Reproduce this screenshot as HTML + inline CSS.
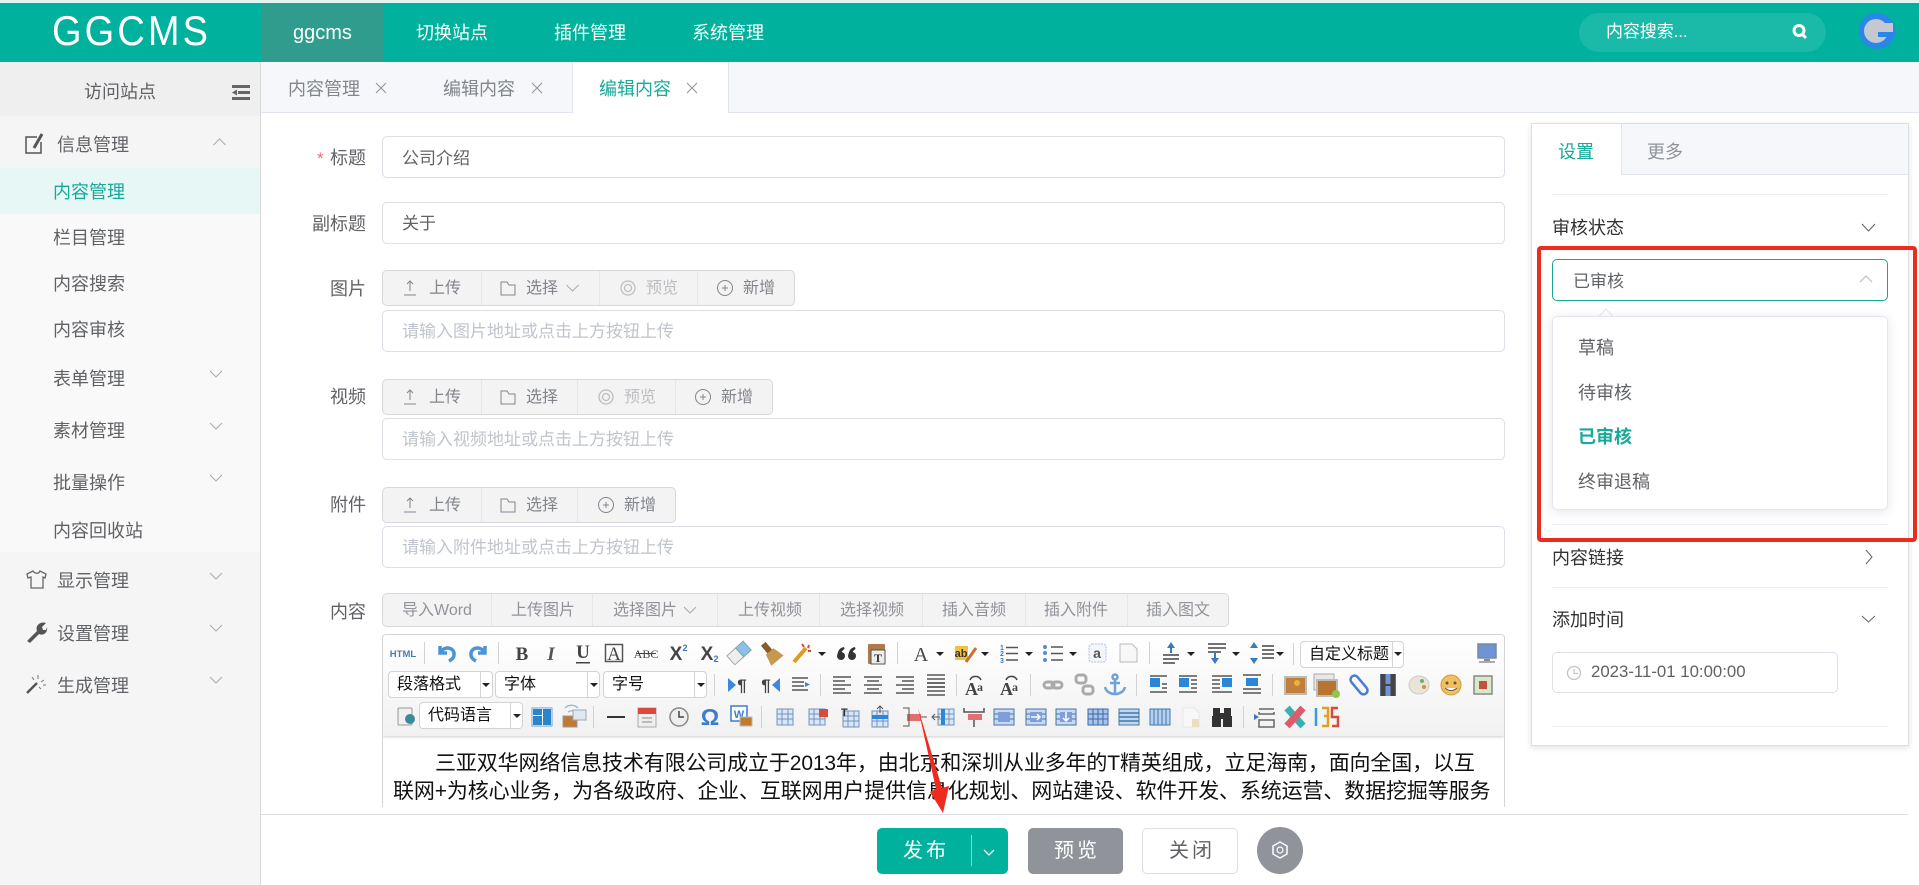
<!DOCTYPE html>
<html lang="zh-CN"><head><meta charset="utf-8"><title>GGCMS</title>
<style>
*{box-sizing:border-box}
html,body{margin:0;padding:0;width:1919px;height:885px;overflow:hidden;background:#fff;font-family:"Liberation Sans","Noto Sans CJK SC",sans-serif;color:#606266}
.a{position:absolute}
.t{position:absolute;white-space:nowrap;line-height:1;transform:translateY(1px)}
.inp{position:absolute;left:382px;width:1123px;height:42px;border:1px solid #dcdfe6;border-radius:5px;background:#fff}
.grp{position:absolute;height:36px;left:382px;border:1px solid #d8d8d8;border-radius:5px;background:#f3f3f3}
.grp i{position:absolute;top:0;bottom:0;width:1px;background:#e6e6e6}
.sel{position:absolute;background:#fff;border:1px solid #d4d4d4;border-radius:4px;height:27px}
.sel b{position:absolute;top:0;bottom:0;width:1px;background:#d4d4d4}
.sel span{position:absolute;top:4px;left:8px;font-size:16px;line-height:18px;color:#111;white-space:nowrap}
</style></head><body>

<!-- header -->
<div class="a" style="left:0;top:0;width:1919px;height:3px;background:#e3f4f2"></div>
<div class="a" style="left:0;top:3px;width:1919px;height:59px;background:#00b19d"></div>
<div class="a" style="left:261px;top:3px;width:122px;height:59px;background:#2f9c8e"></div>
<div class="t" style="left:52px;top:12px;font-size:38px;letter-spacing:3.1px;color:#fff;transform:scaleY(1.1);transform-origin:0 50%;line-height:40px">GGCMS</div>
<div class="t" style="left:293px;top:22px;font-size:20px;color:#fff">ggcms</div>
<div class="t" style="left:416px;top:23px;font-size:18px;color:#fff">切换站点</div>
<div class="t" style="left:554px;top:23px;font-size:18px;color:#fff">插件管理</div>
<div class="t" style="left:692px;top:23px;font-size:18px;color:#fff">系统管理</div>
<div class="a" style="left:1579px;top:13px;width:247px;height:39px;border-radius:20px;background:#1ab9a8"></div>
<div class="t" style="left:1606px;top:22px;font-size:17px;letter-spacing:-.1px;color:#fff">内容搜索...</div>

<!-- sidebar -->
<div class="a" style="left:0;top:62px;width:261px;height:823px;background:#f5f5f5;border-right:1px solid #d9d9d9"></div>
<div class="a" style="left:0;top:62px;width:260px;height:54px;background:#efefef"></div>
<div class="a" style="left:0;top:168px;width:260px;height:384px;background:#f9f9f9"></div>
<div class="a" style="left:0;top:168px;width:260px;height:46px;background:#e6f7f5"></div>
<div class="t" style="left:84px;top:82px;font-size:18px">访问站点</div>
<div class="t" style="left:57px;top:135px;font-size:18px">信息管理</div>
<div class="t" style="left:53px;top:182px;font-size:18px;color:#17a999">内容管理</div>
<div class="t" style="left:53px;top:228px;font-size:18px">栏目管理</div>
<div class="t" style="left:53px;top:274px;font-size:18px">内容搜索</div>
<div class="t" style="left:53px;top:320px;font-size:18px">内容审核</div>
<div class="t" style="left:53px;top:369px;font-size:18px">表单管理</div>
<div class="t" style="left:53px;top:421px;font-size:18px">素材管理</div>
<div class="t" style="left:53px;top:473px;font-size:18px">批量操作</div>
<div class="t" style="left:53px;top:521px;font-size:18px">内容回收站</div>
<div class="t" style="left:57px;top:571px;font-size:18px">显示管理</div>
<div class="t" style="left:57px;top:624px;font-size:18px">设置管理</div>
<div class="t" style="left:57px;top:676px;font-size:18px">生成管理</div>

<!-- tabs -->
<div class="a" style="left:261px;top:62px;width:1658px;height:51px;background:#f5f7fa;border-bottom:1px solid #dfe4ed"></div>
<div class="a" style="left:572px;top:62px;width:157px;height:51px;background:#fff;border-left:1px solid #dfe4ed;border-right:1px solid #dfe4ed"></div>
<div class="t" style="left:288px;top:79px;font-size:18px;color:#82858c">内容管理</div>
<div class="t" style="left:443px;top:79px;font-size:18px;color:#82858c">编辑内容</div>
<div class="t" style="left:599px;top:79px;font-size:18px;color:#17a999">编辑内容</div>

<!-- form -->
<div class="t" style="left:317px;top:149px;font-size:17px;color:#f56c6c">*</div>
<div class="t" style="left:330px;top:148px;font-size:18px">标题</div>
<div class="inp" style="top:136px"></div>
<div class="t" style="left:402px;top:149px;font-size:17px">公司介绍</div>
<div class="t" style="left:312px;top:214px;font-size:18px">副标题</div>
<div class="inp" style="top:202px"></div>
<div class="t" style="left:402px;top:214px;font-size:17px">关于</div>

<div class="t" style="left:330px;top:279px;font-size:18px">图片</div>
<div class="grp" style="top:270px;width:413px"><i style="left:98px"></i><i style="left:216px"></i><i style="left:314px"></i></div>
<div class="t" style="left:429px;top:280px;font-size:16px;color:#82858c">上传</div>
<div class="t" style="left:526px;top:280px;font-size:16px;color:#82858c">选择</div>
<div class="t" style="left:646px;top:280px;font-size:16px;color:#bcbec2">预览</div>
<div class="t" style="left:743px;top:280px;font-size:16px;color:#82858c">新增</div>
<div class="inp" style="top:310px"></div>
<div class="t" style="left:402px;top:322px;font-size:17px;color:#c0c4cc">请输入图片地址或点击上方按钮上传</div>

<div class="t" style="left:330px;top:387px;font-size:18px">视频</div>
<div class="grp" style="top:379px;width:391px"><i style="left:98px"></i><i style="left:194px"></i><i style="left:292px"></i></div>
<div class="t" style="left:429px;top:389px;font-size:16px;color:#82858c">上传</div>
<div class="t" style="left:526px;top:389px;font-size:16px;color:#82858c">选择</div>
<div class="t" style="left:624px;top:389px;font-size:16px;color:#bcbec2">预览</div>
<div class="t" style="left:721px;top:389px;font-size:16px;color:#82858c">新增</div>
<div class="inp" style="top:418px"></div>
<div class="t" style="left:402px;top:430px;font-size:17px;color:#c0c4cc">请输入视频地址或点击上方按钮上传</div>

<div class="t" style="left:330px;top:495px;font-size:18px">附件</div>
<div class="grp" style="top:487px;width:294px"><i style="left:98px"></i><i style="left:194px"></i></div>
<div class="t" style="left:429px;top:497px;font-size:16px;color:#82858c">上传</div>
<div class="t" style="left:526px;top:497px;font-size:16px;color:#82858c">选择</div>
<div class="t" style="left:624px;top:497px;font-size:16px;color:#82858c">新增</div>
<div class="inp" style="top:526px"></div>
<div class="t" style="left:402px;top:538px;font-size:17px;color:#c0c4cc">请输入附件地址或点击上方按钮上传</div>

<div class="t" style="left:330px;top:602px;font-size:18px">内容</div>
<div class="grp" style="top:593px;height:34px;width:847px"><i style="left:108px"></i><i style="left:209px"></i><i style="left:334px"></i><i style="left:436px"></i><i style="left:539px"></i><i style="left:642px"></i><i style="left:744px"></i></div>
<div class="t" style="left:402px;top:602px;font-size:16px;color:#909399">导入Word</div>
<div class="t" style="left:511px;top:602px;font-size:16px;color:#909399">上传图片</div>
<div class="t" style="left:613px;top:602px;font-size:16px;color:#909399">选择图片</div>
<div class="t" style="left:738px;top:602px;font-size:16px;color:#909399">上传视频</div>
<div class="t" style="left:840px;top:602px;font-size:16px;color:#909399">选择视频</div>
<div class="t" style="left:942px;top:602px;font-size:16px;color:#909399">插入音频</div>
<div class="t" style="left:1044px;top:602px;font-size:16px;color:#909399">插入附件</div>
<div class="t" style="left:1146px;top:602px;font-size:16px;color:#909399">插入图文</div>

<!-- editor -->
<div class="a" style="left:382px;top:634px;width:1123px;height:180px;border:1px solid #d4d4d4;border-radius:4px 4px 0 0;background:#fff;overflow:hidden">
  <div class="a" style="left:0;top:0;width:1121px;height:101px;background:linear-gradient(#fff,#f1f1f1);box-shadow:0 1px 3px rgba(0,0,0,.2)"></div>
  <div class="a" style="left:10px;top:115px;font-size:21px;line-height:28px;letter-spacing:-.13px;color:#111;white-space:nowrap">
    <div style="text-indent:42px">三亚双华网络信息技术有限公司成立于2013年，由北京和深圳从业多年的T精英组成，立足海南，面向全国，以互</div>
    <div>联网+为核心业务，为各级政府、企业、互联网用户提供信息化规划、网站建设、软件开发、系统运营、数据挖掘等服务</div>
    <div>商之一。2013年成立以来，公司立足三亚，服务于海南省各级政府和企业单位，成为本地值得信赖的合作伙伴之一</div>
  </div>
</div>
<div class="sel" style="left:1300px;top:641px;width:104px"><b style="left:91px"></b><span style="left:8px">自定义标题</span></div>
<div class="sel" style="left:388px;top:671px;width:105px"><b style="left:91px"></b><span>段落格式</span></div>
<div class="sel" style="left:495px;top:671px;width:105px"><b style="left:91px"></b><span>字体</span></div>
<div class="sel" style="left:603px;top:671px;width:104px"><b style="left:90px"></b><span>字号</span></div>
<div class="sel" style="left:419px;top:702px;width:104px"><b style="left:90px"></b><span>代码语言</span></div>

<!-- footer -->
<div class="a" style="left:261px;top:807px;width:1647px;height:7px;background:#fff"></div>
<div class="a" style="left:261px;top:814px;width:1647px;height:71px;background:#fff;border-top:1px solid #dcdfe6"></div>
<div class="a" style="left:877px;top:828px;width:131px;height:46px;background:#00b19d;border-radius:5px"></div>
<div class="a" style="left:971px;top:835px;width:1px;height:31px;background:#7fd8ce"></div>
<div class="t" style="left:903px;top:840px;font-size:20px;letter-spacing:3px;color:#fff">发布</div>
<div class="a" style="left:1028px;top:828px;width:95px;height:46px;background:#909399;border-radius:5px"></div>
<div class="t" style="left:1054px;top:840px;font-size:20px;letter-spacing:3px;color:#fff">预览</div>
<div class="a" style="left:1142px;top:828px;width:96px;height:46px;background:#fff;border:1px solid #dcdfe6;border-radius:5px"></div>
<div class="t" style="left:1169px;top:840px;font-size:20px;letter-spacing:3px;color:#606266">关闭</div>
<div class="a" style="left:1257px;top:827px;width:46px;height:47px;background:#909399;border-radius:50%"></div>

<!-- right panel -->
<div class="a" style="left:1531px;top:123px;width:378px;height:623px;background:#fff;border:1px solid #dcdfe6;box-shadow:0 2px 6px rgba(0,0,0,.12)"></div>
<div class="a" style="left:1621px;top:124px;width:287px;height:51px;background:#f5f7fa;border-left:1px solid #dfe4ed;border-bottom:1px solid #dfe4ed"></div>
<div class="t" style="left:1558px;top:142px;font-size:18px;color:#17a999">设置</div>
<div class="t" style="left:1647px;top:142px;font-size:18px;color:#909399">更多</div>
<div class="a" style="left:1552px;top:194px;width:336px;height:1px;background:#ebeef5"></div>
<div class="t" style="left:1552px;top:218px;font-size:18px;color:#303133">审核状态</div>
<div class="a" style="left:1552px;top:259px;width:336px;height:42px;border:1px solid #17a598;border-radius:5px;background:#fff"></div>
<div class="t" style="left:1573px;top:272px;font-size:17px">已审核</div>
<div class="a" style="left:1600px;top:311px;width:12px;height:12px;background:#fff;border:1px solid #e4e7ed;transform:rotate(45deg)"></div>
<div class="a" style="left:1552px;top:316px;width:336px;height:194px;background:#fff;border:1px solid #e4e7ed;border-radius:5px;box-shadow:0 2px 12px rgba(0,0,0,.1)"></div>
<div class="t" style="left:1578px;top:338px;font-size:18px">草稿</div>
<div class="t" style="left:1578px;top:383px;font-size:18px">待审核</div>
<div class="t" style="left:1578px;top:427px;font-size:18px;font-weight:bold;color:#17a999">已审核</div>
<div class="t" style="left:1578px;top:472px;font-size:18px">终审退稿</div>
<div class="a" style="left:1552px;top:524px;width:336px;height:1px;background:#ebeef5"></div>
<div class="t" style="left:1552px;top:548px;font-size:18px;color:#303133">内容链接</div>
<div class="a" style="left:1552px;top:587px;width:336px;height:1px;background:#ebeef5"></div>
<div class="t" style="left:1552px;top:610px;font-size:18px;color:#303133">添加时间</div>
<div class="a" style="left:1552px;top:652px;width:286px;height:41px;border:1px solid #dcdfe6;border-radius:5px"></div>
<div class="t" style="left:1591px;top:663px;font-size:16.800px">2023-11-01 10:00:00</div>
<div class="a" style="left:1552px;top:726px;width:336px;height:1px;background:#ebeef5"></div>
<div class="a" style="left:1537px;top:246px;width:380px;height:296px;border:4px solid #ef2a1e;border-radius:4px"></div>

<!-- icon overlay -->
<svg class="a" style="left:0;top:0;pointer-events:none" width="1919" height="885" viewBox="0 0 1919 885" xmlns="http://www.w3.org/2000/svg" font-family="Liberation Serif, serif">
<defs>
<path id="dn" d="M-6 -3 L0 3 L6 -3" fill="none" stroke="#a8abb2" stroke-width="1"/>
<path id="up" d="M-6 3 L0 -3 L6 3" fill="none" stroke="#a8abb2" stroke-width="1"/>
<g id="x"><path d="M-5 -5 L5 5 M5 -5 L-5 5" stroke="#909399" fill="none"/></g>
<g id="u" fill="none" stroke="#82858c"><path d="M-6 7 H6 M0 3 V-7 M-3 -4 L0 -7 L3 -4"/></g>
<g id="f" fill="none" stroke="#82858c"><path d="M-7 7 V-6 H-1 L1 -3 H7 V7 Z"/></g>
<g id="e" fill="none" stroke="#bcbec2" stroke-width="1.300"><circle r="7"/><circle r="3.500"/></g>
<g id="p" fill="none" stroke="#82858c"><circle r="7.500"/><path d="M-3 0 H3 M0 -3 V3"/></g>
<path id="ar" d="M-4 -2 H4 L0 2 Z" fill="#222"/>
<g id="lines" stroke="#555" stroke-width="1.500"><path d="M-9 -6 H9 M-9 -2 H9 M-9 2 H9 M-9 6 H9"/></g>
<g id="tb"><rect x="-8" y="-8" width="16" height="16" fill="#dbe6f4" stroke="#6f93c0"/><path d="M-8 -3 H8 M-8 2 H8 M-3 -8 V8 M3 -8 V8" stroke="#6f93c0"/></g>
<g id="tb2"><rect x="-10" y="-8" width="20" height="16" fill="#c8daf2" stroke="#4473a8"/><rect x="-6" y="-5" width="12" height="10" fill="#7f9fdc"/><path d="M-10 -3 H-6 M-10 2 H-6 M6 -3 H10 M6 2 H10" stroke="#4473a8"/></g>
<g id="tb3"><rect x="-10" y="-8" width="20" height="16" fill="#a8c4ea" stroke="#3f66a8"/><path d="M-10 -3 H10 M-10 2 H10 M-5 -8 V8 M0 -8 V8 M5 -8 V8" stroke="#3f66a8"/></g>
<g id="tb4"><rect x="-10" y="-8" width="20" height="16" fill="#c0d6f0" stroke="#3f76a8"/><path d="M-10 -4 H10 M-10 0 H10 M-10 4 H10" stroke="#3f76a8" stroke-width="1.500"/></g>
<g id="tb5"><rect x="-10" y="-8" width="20" height="16" fill="#b8d0f0" stroke="#3f76a8"/><path d="M-6 -8 V8 M-2 -8 V8 M2 -8 V8 M6 -8 V8" stroke="#3f76a8"/></g>
<g id="sep"><rect x="0" y="-11" width="1" height="22" fill="#d2d2d2"/></g>
</defs>

<!-- top -->
<g fill="none" stroke="#fff" stroke-width="3"><circle cx="1799" cy="30.500" r="5"/><path d="M1803 35 L1806 38"/></g>
<circle cx="1877" cy="31" r="18" fill="#2a86e8"/><circle cx="1876" cy="31" r="12" fill="#c5c8d0"/><rect x="1882" y="23" width="11" height="9" fill="#c5c8d0"/><rect x="1878" y="32" width="17" height="5" fill="#2a86e8"/>

<!-- sidebar icons -->
<g fill="#666"><rect x="232" y="85" width="18" height="3"/><rect x="238" y="91" width="12" height="3"/><rect x="232" y="97" width="18" height="3"/><path d="M232 92.500 L237 89.500 V95.500 Z"/></g>
<g fill="none" stroke="#555" stroke-width="1.500"><path d="M37 137 H26 V153 H41 V142"/><path d="M34 148 L42 134" stroke-width="3"/></g>
<use href="#up" x="219.500" y="142"/><use href="#dn" x="216" y="374"/><use href="#dn" x="216" y="426"/><use href="#dn" x="216" y="478"/><use href="#dn" x="216" y="576"/><use href="#dn" x="216" y="628"/><use href="#dn" x="216" y="680"/>
<path d="M33 571 L27 574 L28 578 L31 577 V588 H43 V577 L45 578 L46 574 L40 571 C39 574 35 574 33 571 Z" fill="none" stroke="#666" stroke-width="1.300"/>
<path d="M27 641 L37 631 C35 626 40 621 46 623 L42 627 L43 630 L46 630 L47 627 C48 633 43 636 39 634 L30 643 Z" fill="#555"/>
<path d="M27 693 L37 683" stroke="#555" stroke-width="2.500"/><path d="M38 675 V679 M44 680 L41 682 M46 685 H43 M41 689 L39 687 M32 677 L34 680" stroke="#777"/>

<!-- tab x -->
<use href="#x" x="381" y="88"/><use href="#x" x="537" y="88"/><use href="#x" x="692" y="88"/>

<!-- group icons -->
<use href="#u" x="410" y="288"/><use href="#f" x="508" y="288"/><use href="#dn" x="572.500" y="288"/><use href="#e" x="628" y="288"/><use href="#p" x="725" y="288"/>
<use href="#u" x="410" y="397"/><use href="#f" x="508" y="397"/><use href="#e" x="606" y="397"/><use href="#p" x="703" y="397"/>
<use href="#u" x="410" y="505"/><use href="#f" x="508" y="505"/><use href="#p" x="606" y="505"/>
<use href="#dn" x="690" y="610"/>

<!-- toolbar row 1 -->
<text x="403" y="657" font-family="Liberation Sans" font-weight="bold" font-size="9.500" fill="#4a7cb0" text-anchor="middle">HTML</text>
<use href="#sep" x="424" y="653"/>
<g transform="translate(447,653)" fill="none" stroke="#4a95d6" stroke-width="3.500"><path d="M-7 -7 V0 H0"/><path d="M-6 -1 C-2 -8 8 -5 7 2 C7 5 4 7 2 8"/></g>
<g transform="translate(478,653) scale(-1,1)" fill="none" stroke="#4a95d6" stroke-width="3.500"><path d="M-7 -7 V0 H0"/><path d="M-6 -1 C-2 -8 8 -5 7 2 C7 5 4 7 2 8"/></g>
<use href="#sep" x="498" y="653"/>
<g fill="#444" text-anchor="middle">
<text x="522" y="660" font-size="19" font-weight="bold">B</text>
<text x="551" y="660" font-size="19" font-weight="bold" font-style="italic" fill="#555">I</text>
<text x="583" y="658" font-size="19" font-weight="bold">U</text><rect x="576" y="662" width="14" height="1.500"/>
<text x="614" y="660" font-size="19">A</text><rect x="605.500" y="644.500" width="17" height="17" fill="none" stroke="#555" stroke-width="1.500"/>
<text x="646" y="658" font-size="12" font-family="Liberation Serif">ABC</text><rect x="636" y="653" width="20" height="1"/>
<text x="676" y="660" font-size="19" font-family="Liberation Sans" font-weight="bold">X</text><text x="685" y="651" font-size="9" font-family="Liberation Sans" font-weight="bold" fill="#3a78c0">2</text>
<text x="707" y="660" font-size="19" font-family="Liberation Sans" font-weight="bold">X</text><text x="716" y="662" font-size="9" font-family="Liberation Sans" font-weight="bold" fill="#3a78c0">2</text>
</g>
<g transform="translate(739,653) rotate(-42)"><rect x="-11" y="-6" width="12" height="12" fill="#eee" stroke="#aaa"/><rect x="1" y="-6" width="10" height="12" fill="#8cc0ea" stroke="#7aa"/></g>
<g transform="translate(771,653) rotate(-40)"><rect x="-3" y="-12" width="6" height="11" fill="#8a5a28"/><path d="M-8 10 L-5 -2 H5 L8 10 Z" fill="#c49a50"/></g>
<path d="M794 662 L806 648" stroke="#e09a20" stroke-width="4"/><path d="M802 644 l2 3 M809 645 l-1 3 M811 651 h-3" stroke="#d43" stroke-width="2"/><use href="#ar" x="822" y="654"/>
<g fill="#333"><circle cx="841" cy="656" r="4"/><circle cx="852" cy="656" r="4"/><path d="M837.500 655 Q838 648 844 647 L844.500 649 Q841 651 841 655 Z M848.500 655 Q849 648 855 647 L855.500 649 Q852 651 852 655 Z"/></g>
<rect x="868" y="644" width="17" height="20" rx="1" fill="#b07a4a"/><rect x="871" y="650" width="14" height="14" fill="#eee" stroke="#555"/><text x="878" y="662" font-size="12" font-weight="bold" text-anchor="middle" fill="#333">T</text>
<use href="#sep" x="897" y="653"/>
<text x="921" y="661" font-size="20" text-anchor="middle" fill="#444">A</text><use href="#ar" x="940" y="654"/>
<rect x="955" y="646" width="13" height="14" fill="#f0c040"/><text x="961" y="657" font-size="11" font-weight="bold" font-family="Liberation Sans" text-anchor="middle" fill="#333">ab</text><path d="M966 662 L976 648" stroke="#c8752a" stroke-width="3"/><use href="#ar" x="985" y="654"/>
<g fill="#3a78c0" font-family="Liberation Sans" font-size="7" font-weight="bold"><text x="1000" y="650">1</text><text x="1000" y="656">2</text><text x="1000" y="663">3</text></g>
<path d="M1006 647.500 H1018 M1006 653.500 H1018 M1006 660 H1018" stroke="#555" stroke-width="1.500"/><use href="#ar" x="1029" y="654"/>
<g fill="#5a8ad0"><circle cx="1045" cy="647" r="2"/><circle cx="1045" cy="653" r="2"/><circle cx="1045" cy="660" r="2"/></g><path d="M1051 647 H1063 M1051 653.500 H1063 M1051 660 H1063" stroke="#555" stroke-width="1.500"/><use href="#ar" x="1073" y="654"/>
<rect x="1089" y="644" width="17" height="18" rx="3" fill="#f2f5fa" stroke="#aac4e8" stroke-dasharray="2 1"/><text x="1097" y="658" font-size="14" font-weight="bold" font-family="Liberation Sans" text-anchor="middle" fill="#555">a</text>
<path d="M1120 644 H1132 L1137 649 V662 H1120 Z" fill="#f7f7f7" stroke="#bbb"/>
<use href="#sep" x="1149" y="653"/>
<path d="M1171 642 L1167 648 H1175 Z" fill="#3a78c0"/><rect x="1170" y="647" width="2" height="6" fill="#3a78c0"/><path d="M1163 655 H1179 M1163 659 H1179 M1163 663 H1175" stroke="#444" stroke-width="1.500"/><use href="#ar" x="1191" y="654"/>
<path d="M1208 644 H1226 M1208 648 H1226 M1208 652 H1221" stroke="#444" stroke-width="1.500"/><path d="M1215 664 L1211 658 H1219 Z" fill="#3a78c0"/><rect x="1214" y="653" width="2" height="6" fill="#3a78c0"/><use href="#ar" x="1236" y="654"/>
<path d="M1254 642 L1250 648 H1258 Z M1254 664 L1250 658 H1258 Z" fill="#3a78c0"/><path d="M1262 646 H1274 M1262 650 H1274 M1262 654 H1274 M1262 658 H1274" stroke="#444" stroke-width="1.500"/><use href="#ar" x="1280" y="654"/>
<use href="#sep" x="1293" y="654"/><use href="#ar" x="1398" y="654"/>
<rect x="1478" y="644" width="18" height="14" fill="#6f94d6" stroke="#7a8a9a" stroke-width="1.500"/><rect x="1484" y="659" width="6" height="2" fill="#889"/><rect x="1479" y="661" width="16" height="2" fill="#aab"/>

<!-- row 2 -->
<use href="#ar" x="486" y="685"/><use href="#ar" x="594" y="685"/><use href="#ar" x="701" y="685"/>
<use href="#sep" x="714" y="685"/>
<g font-family="Liberation Sans" font-size="17" font-weight="bold" fill="#444" text-anchor="middle"><text x="742" y="691">¶</text><text x="766" y="691">¶</text></g>
<path d="M728 678 L736 685 L728 692 Z" fill="#3a88e0"/><path d="M780 678 L772 685 L780 692 Z" fill="#3a88e0"/>
<path d="M792 678 H808 M792 682 H804 M792 686 H804 M792 690 H808" stroke="#555" stroke-width="1.500"/><path d="M805 682 L810 684.500 L805 687 Z" fill="#3a88e0"/>
<use href="#sep" x="820" y="685"/>
<path d="M833 677 H851 M833 681 H845 M833 685 H851 M833 689 H845 M833 693 H851" stroke="#555" stroke-width="1.500"/>
<path d="M864 677 H882 M867 681 H879 M864 685 H882 M867 689 H879 M864 693 H882" stroke="#555" stroke-width="1.500"/>
<path d="M896 677 H914 M902 681 H914 M896 685 H914 M902 689 H914 M896 693 H914" stroke="#555" stroke-width="1.500"/>
<use href="#lines" x="936" y="681"/><use href="#lines" x="936" y="689"/>
<use href="#sep" x="956" y="685"/>
<g font-family="Liberation Serif" font-weight="bold" fill="#444"><text x="965" y="695" font-size="18">A</text><text x="977" y="691" font-size="12">a</text><text x="1000" y="695" font-size="18">A</text><text x="1012" y="691" font-size="12">a</text></g>
<path d="M970 680 A6 6 0 0 1 981 680" fill="none" stroke="#444" stroke-width="1.500"/><path d="M1006 680 A6 6 0 0 1 1017 680" fill="none" stroke="#444" stroke-width="1.500"/>
<use href="#sep" x="1030" y="685"/>
<g fill="none" stroke="#aaa" stroke-width="3"><rect x="1044" y="682" width="10" height="6" rx="3"/><rect x="1052" y="682" width="10" height="6" rx="3"/><rect x="1076" y="675" width="10" height="8" rx="3"/><rect x="1083" y="686" width="10" height="8" rx="3"/></g>
<g fill="none" stroke="#6fa3d8" stroke-width="2.500"><circle cx="1115" cy="677" r="2.500"/><path d="M1115 680 V694 M1110 683 H1120 M1105 687 C1106 692 1111 694 1115 694 C1119 694 1124 692 1125 687"/></g>
<use href="#sep" x="1136" y="685"/>
<rect x="1150" y="678" width="10" height="9" fill="#2a86d8"/><path d="M1150 676 H1167 M1162 684 H1167 M1162 688 H1167 M1150 692 H1167" stroke="#555" stroke-width="1.500"/>
<rect x="1179" y="678" width="10" height="9" fill="#2a86d8"/><path d="M1179 676 H1197 M1191 680 H1197 M1191 684 H1197 M1191 688 H1197 M1179 692 H1197" stroke="#555" stroke-width="1.500"/>
<rect x="1222" y="678" width="10" height="9" fill="#2a86d8"/><path d="M1212 676 H1232 M1212 680 H1220 M1212 684 H1220 M1212 688 H1220 M1212 692 H1232" stroke="#555" stroke-width="1.500"/>
<rect x="1246" y="678" width="12" height="8" fill="#2a86d8"/><path d="M1243 675 H1261 M1243 689 H1261 M1243 693 H1261" stroke="#555" stroke-width="1.500"/>
<use href="#sep" x="1272" y="685"/>
<rect x="1285" y="677" width="21" height="17" fill="#c0803a" stroke="#bbb" stroke-width="2"/><circle cx="1297" cy="683" r="3" fill="#f0b040"/>
<rect x="1314" y="674" width="20" height="16" fill="#e8e8e8" stroke="#aaa"/><rect x="1317" y="680" width="20" height="16" fill="#b87430" stroke="#bbb" stroke-width="2"/><circle cx="1336" cy="694" r="4" fill="#8cc840"/>
<g fill="none" stroke="#4a7cd0" stroke-width="2.500" transform="translate(1359,685) rotate(-40)"><rect x="-4" y="-11" width="8" height="22" rx="4"/></g>
<rect x="1380" y="674" width="16" height="22" fill="#6f94d6"/><path d="M1383 674 V696 M1393 674 V696" stroke="#444" stroke-width="5"/><rect x="1385" y="684" width="6" height="2" fill="#444"/>
<ellipse cx="1419" cy="685" rx="10" ry="9" fill="#e8e4d8" stroke="#ccc"/><circle cx="1422" cy="681" r="2" fill="#70b070"/><circle cx="1424" cy="687" r="2" fill="#d89040"/>
<circle cx="1451" cy="685" r="10" fill="#f0c060" stroke="#d09838"/><circle cx="1447" cy="683" r="1.500" fill="#654"/><circle cx="1455" cy="683" r="1.500" fill="#654"/><path d="M1445 688 Q1451 693 1457 688" stroke="#654" fill="#fff"/>
<rect x="1474" y="676" width="18" height="18" fill="#d8e8c8" stroke="#888" stroke-width="1.500"/><rect x="1479" y="681" width="8" height="8" fill="#c05040"/>

<!-- row 3 -->
<rect x="398" y="708" width="14" height="17" rx="1" fill="#f0f0f0" stroke="#999"/><circle cx="410" cy="719" r="5" fill="#3a8a9a"/>
<use href="#ar" x="517" y="716"/>
<rect x="532" y="708" width="20" height="18" fill="#fff" stroke="#6aa0d0"/><rect x="533" y="709" width="9" height="6" fill="#2a86c8"/><rect x="533" y="716" width="9" height="9" fill="#2a86c8"/><rect x="543" y="709" width="8" height="16" fill="#2a86c8"/>
<path d="M565 708 A9 9 0 0 1 578 708 M568 712 A6 6 0 0 1 575 712" fill="none" stroke="#9ab8d8" stroke-width="1.500"/><rect x="563" y="716" width="14" height="11" fill="#c07a30" stroke="#999"/><rect x="573" y="710" width="13" height="10" fill="#dfe8f0" stroke="#9ab"/>
<use href="#sep" x="593" y="717"/>
<rect x="607" y="716" width="18" height="2" fill="#333"/>
<rect x="638" y="708" width="18" height="19" fill="#eee" stroke="#aaa"/><rect x="638" y="708" width="18" height="6" fill="#d84b3c"/><path d="M642 718 H652 M642 722 H652" stroke="#bbb" stroke-width="2"/>
<circle cx="679" cy="717" r="9" fill="#eee" stroke="#888" stroke-width="1.500"/><path d="M679 711 V717 H684" fill="none" stroke="#444" stroke-width="1.500"/>
<text x="710" y="725" font-size="23" font-family="Liberation Sans" font-weight="bold" text-anchor="middle" fill="#3a7cd0">Ω</text>
<rect x="731" y="706" width="16" height="15" fill="#fff" stroke="#3a7cd0" stroke-width="1.500"/><text x="739" y="718" font-size="11" font-weight="bold" font-family="Liberation Sans" text-anchor="middle" fill="#3a7cd0">W</text><rect x="740" y="717" width="12" height="9" fill="#c07a30" stroke="#bbb"/>
<use href="#sep" x="761" y="717"/>
<use href="#tb" x="785" y="717"/><use href="#tb" x="817" y="717"/><rect x="819" y="709" width="9" height="8" fill="#d84b3c"/>
<use href="#tb" x="851" y="719"/><text x="841" y="716" font-size="11" font-weight="bold" font-family="Liberation Sans" fill="#333">T</text>
<use href="#tb" x="880" y="719"/><rect x="872" y="715" width="16" height="4" fill="#2a86d8"/><path d="M880 706 V713 M877 709 L880 706 L883 709" stroke="#555" fill="none"/>
<rect x="907" y="714" width="14" height="7" fill="#e07070"/><path d="M903 708 H909 V726 H903 M921 717 H927" stroke="#555" fill="none"/>
<use href="#tb" x="946" y="717"/><rect x="941" y="709" width="4" height="16" fill="#2a86d8"/><path d="M932 717 H940 M935 714 L932 717 L935 720" stroke="#555" fill="none"/>
<rect x="968" y="714" width="14" height="6" fill="#e07070"/><path d="M964 708 V712 H984 V708 M974 720 V727" stroke="#555" stroke-width="1.500" fill="none"/>
<use href="#tb2" x="1004" y="717"/><use href="#tb2" x="1036" y="717"/><use href="#tb2" x="1066" y="717"/>
<path d="M1031 717 H1040 M1037 714 L1040 717 L1037 720" stroke="#fff" stroke-width="1.500" fill="none"/><path d="M1066 712 V721 M1063 718 L1066 721 L1069 718" stroke="#fff" stroke-width="1.500" fill="none"/>
<use href="#tb3" x="1098" y="717"/><use href="#tb4" x="1129" y="717"/><use href="#tb5" x="1160" y="717"/>
<path d="M1183 708 H1194 L1199 713 V727 H1183 Z" fill="#f8f8f8" stroke="#e8e8e8"/><rect x="1192" y="719" width="7" height="8" fill="#e8e0c0"/>
<g fill="#333"><rect x="1213" y="708" width="7" height="9"/><rect x="1224" y="708" width="7" height="9"/><rect x="1212" y="716" width="9" height="11"/><rect x="1223" y="716" width="9" height="11"/><rect x="1219" y="713" width="6" height="6"/></g>
<use href="#sep" x="1243" y="717"/>
<path d="M1259 709 H1274 M1259 712 V714 H1274 V712 M1259 720 H1274 V727 H1259 Z" fill="none" stroke="#666" stroke-width="1.500"/><path d="M1254 714 L1259 717 L1254 720 Z" fill="#3a78c0"/>
<path d="M1287 708 L1303 726" stroke="#3ab0b0" stroke-width="7"/><path d="M1303 708 L1287 726" stroke="#e05a6a" stroke-width="7"/>
<g stroke-width="2.500" fill="none"><path d="M1316 708 V726" stroke="#3a9ad8"/><path d="M1322 708 H1328 V716 H1324 M1328 716 V726 H1322" stroke="#e0a020"/><path d="M1338 708 H1332 V717 H1338 V726 H1332" stroke="#d84b3c"/></g>

<!-- right panel icons -->
<path d="M1862 224 L1868.500 231 L1875 224" fill="none" stroke="#606266"/>
<path d="M1860 282 L1866 276 L1872 282" fill="none" stroke="#c0c4cc" stroke-width="1.300"/>
<path d="M1866 550 L1872 557 L1866 564" fill="none" stroke="#606266"/>
<path d="M1862 616 L1868.500 622 L1875 616" fill="none" stroke="#606266"/>
<circle cx="1574" cy="673" r="6.500" fill="none" stroke="#c0c4cc" stroke-width="1.300"/><path d="M1574 669 V673.500 H1578" fill="none" stroke="#c0c4cc" stroke-width="1.200"/>

<!-- footer icons -->
<path d="M984 850 L989 855 L994 850" fill="none" stroke="#fff" stroke-width="1.300"/>
<path d="M1280 842 L1287 846 V854 L1280 858 L1273 854 V846 Z" fill="none" stroke="#fff" stroke-width="1.500"/><circle cx="1280" cy="850" r="3" fill="none" stroke="#fff" stroke-width="1.200"/>

<!-- red arrow -->
<path d="M918 708 L936 789 L930 792 L943 813 L949 786 L942 788 Z" fill="#ef2a1e"/>
</svg>
</body></html>
